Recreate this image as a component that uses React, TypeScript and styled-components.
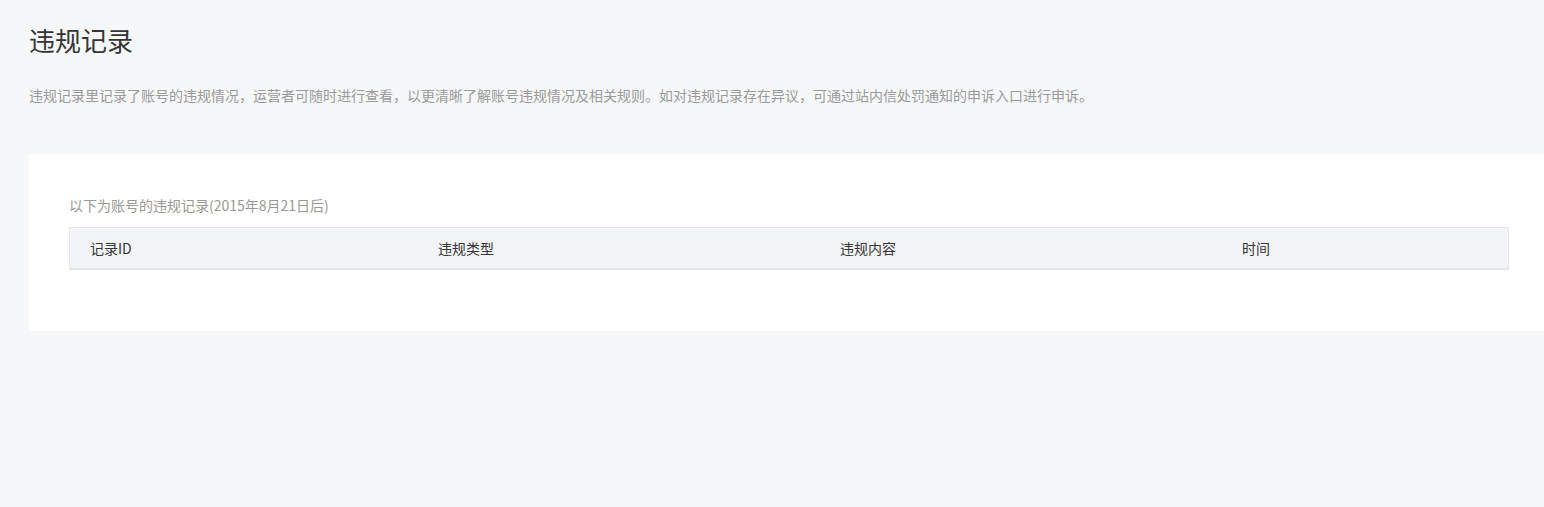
import styled, { createGlobalStyle } from "styled-components";

const GlobalStyle = createGlobalStyle`
  html, body {
    margin: 0;
    padding: 0;
    background: #f6f7f9;
    overflow: hidden;
  }
  body {
    font-family: "Noto Sans CJK SC", "Noto Sans", sans-serif;
    color: #353535;
  }
`;

const Page = styled.div`
  min-height: 507px;
  padding: 20px 0 0 29px;
  box-sizing: border-box;
`;

const Title = styled.h2`
  margin: 0;
  font-size: 26px;
  font-weight: 400;
  line-height: 40px;
  color: #353535;
`;

const Desc = styled.p`
  margin: 24px 0 0;
  font-size: 14px;
  line-height: 22px;
  color: #9a9a9a;
`;

const Card = styled.section`
  margin-top: 48px;
  width: 1520px;
  background: #fff;
  border-radius: 2px;
  padding: 41px 40px 61px;
  box-sizing: border-box;
`;

const SubTitle = styled.div`
  font-size: 14px;
  line-height: 20px;
  color: #9b9894;
  margin-bottom: 12px;
`;

const Table = styled.div`
  border: 1px solid #e4e6eb;
  border-bottom-width: 2px;
  background: #f3f4f8;
`;

const HeadRow = styled.div`
  display: grid;
  grid-template-columns: 348px 402px 402px 1fr;
  height: 40px;
  align-items: center;
`;

const HeadCell = styled.div`
  padding-left: 20px;
  font-size: 14px;
  color: #353535;
`;

const columns = ["记录ID", "违规类型", "违规内容", "时间"];

export default function App() {
  return (
    <>
      <GlobalStyle />
      <Page>
        <Title>违规记录</Title>
        <Desc>
          违规记录里记录了账号的违规情况，运营者可随时进行查看，以更清晰了解账号违规情况及相关规则。如对违规记录存在异议，可通过站内信处罚通知的申诉入口进行申诉。
        </Desc>
        <Card>
          <SubTitle>以下为账号的违规记录(2015年8月21日后)</SubTitle>
          <Table>
            <HeadRow>
              {columns.map((c) => (
                <HeadCell key={c}>{c}</HeadCell>
              ))}
            </HeadRow>
          </Table>
        </Card>
      </Page>
    </>
  );
}
